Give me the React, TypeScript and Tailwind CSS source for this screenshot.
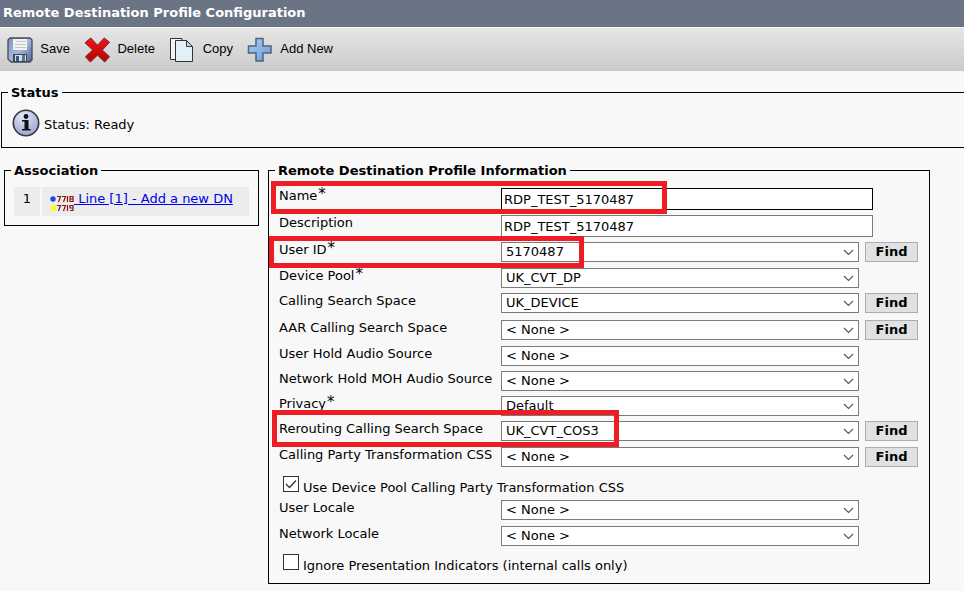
import type { ReactNode } from 'react';

interface Field {
  id: string;
  label: string;
  value: string;
  kind: 'text' | 'select';
  required?: boolean;
  find?: boolean;
  row: string;
  mark?: string;
}

const fields: Field[] = [
  { id: 'name', label: 'Name', value: 'RDP_TEST_5170487', kind: 'text', required: true, row: 'h-[27px]', mark: '-left-2 -top-[7px] w-[396px] h-[33px]' },
  { id: 'description', label: 'Description', value: 'RDP_TEST_5170487', kind: 'text', row: 'h-[27px]' },
  { id: 'userid', label: 'User ID', value: '5170487', kind: 'select', required: true, find: true, row: 'h-[26px]', mark: '-left-[10px] -top-[6px] w-[315px] h-[32px]' },
  { id: 'pool', label: 'Device Pool', value: 'UK_CVT_DP', kind: 'select', required: true, row: 'h-[25px]' },
  { id: 'css', label: 'Calling Search Space', value: 'UK_DEVICE', kind: 'select', find: true, row: 'h-[27px]' },
  { id: 'aar', label: 'AAR Calling Search Space', value: '< None >', kind: 'select', find: true, row: 'h-[26px]' },
  { id: 'userhold', label: 'User Hold Audio Source', value: '< None >', kind: 'select', row: 'h-[25px]' },
  { id: 'nethold', label: 'Network Hold MOH Audio Source', value: '< None >', kind: 'select', row: 'h-[25px]' },
  { id: 'privacy', label: 'Privacy', value: 'Default', kind: 'select', required: true, row: 'h-[25px]' },
  { id: 'rerouting', label: 'Rerouting Calling Search Space', value: 'UK_CVT_COS3', kind: 'select', find: true, row: 'h-[26px]', mark: '-left-[7px] -top-[11px] w-[347px] h-[37px]' },
  { id: 'party', label: 'Calling Party Transformation CSS', value: '< None >', kind: 'select', find: true, row: 'h-[26px]' },
];

const locales: Field[] = [
  { id: 'userlocale', label: 'User Locale', value: '< None >', kind: 'select', row: 'h-[26px]' },
  { id: 'netlocale', label: 'Network Locale', value: '< None >', kind: 'select', row: 'h-[25px]' },
];

function SaveIcon() {
  return (
    <svg width="26" height="26" viewBox="0 0 26 26">
      <defs>
        <linearGradient id="disk" x1="0" y1="0" x2="1" y2="1">
          <stop offset="0" stopColor="#7f95bd" />
          <stop offset=".5" stopColor="#a3b8db" />
          <stop offset="1" stopColor="#4c648f" />
        </linearGradient>
      </defs>
      <path d="M3 1h20l2 2v20l-2 2H4l-3-3V3z" fill="url(#disk)" stroke="#434a58" strokeWidth="1.300" />
      <path d="M6 2h14v11H6z" fill="#f3f3f3" />
      <path d="M9 4.500h10M8 7.500h11M8 10.500h11" stroke="#c3c5c8" />
      <path d="M6 17h14v8H6z" fill="#3c4656" />
      <path d="M8 18h11v6H8z" fill="#d5dfdf" />
      <path d="M9 19h3v5H9z" fill="#2c5c93" />
      <path d="M15 18h3v6h-3z" fill="#5f7484" />
    </svg>
  );
}

function DeleteIcon() {
  return (
    <svg width="27" height="28" viewBox="0 0 28 28">
      <defs>
        <linearGradient id="cross" x1="0" y1="0" x2="0" y2="1">
          <stop offset="0" stopColor="#f31414" />
          <stop offset="1" stopColor="#b30505" />
        </linearGradient>
      </defs>
      <path d="M1 6.500 7 1.500l7 7.500 7-7.500 5.500 4.500-7.500 8 7.500 7-5 5.500L14 19.500l-7.500 7L1.500 21 9 14z" fill="url(#cross)" stroke="#7b2236" />
    </svg>
  );
}

function CopyIcon() {
  return (
    <svg width="25" height="26" viewBox="0 0 25 26">
      <path d="M1.500 1.500H13v21H1.500z" fill="#f2f6f7" stroke="#333" />
      <path d="M6.500 3.500h11l6 6v15h-17z" fill="#e3f1f6" stroke="#333" />
      <path d="M17.500 3.500v6h6z" fill="#c4dae2" stroke="#333" />
    </svg>
  );
}

function AddIcon() {
  return (
    <svg width="25" height="25" viewBox="0 0 25 25">
      <defs>
        <linearGradient id="plus" x1="0" y1="0" x2="1" y2="1">
          <stop offset="0" stopColor="#a9cdf3" />
          <stop offset="1" stopColor="#6a9cd8" />
        </linearGradient>
      </defs>
      <path d="M9 1.500h7v7.500h8v7h-8v8H9v-8H1.500V9H9z" fill="url(#plus)" stroke="#55627a" strokeWidth="1.500" />
    </svg>
  );
}

function InfoIcon() {
  return (
    <svg width="28" height="28" viewBox="0 0 28 28">
      <defs>
        <radialGradient id="info" cx=".4" cy=".25" r=".8">
          <stop offset="0" stopColor="#e4e8f6" />
          <stop offset="1" stopColor="#97a3cf" />
        </radialGradient>
      </defs>
      <circle cx="14" cy="14" r="12.700" fill="url(#info)" stroke="#33363f" strokeWidth="1.600" />
      <circle cx="14" cy="7.500" r="2.400" fill="#111" />
      <path d="M10 11h6.500v9h2v1.500H10V20h2.500v-7.500H10z" fill="#111" />
    </svg>
  );
}

// two directory-number plates, 7718 over 7719
function LineIcon() {
  return (
    <svg width="24" height="17" viewBox="0 0 24 17" className="shrink-0">
      <circle cx="3" cy="4" r="2.700" fill="#1748e8" />
      <path d="M1 10.500h5v5H1z" fill="#ff0" />
      <path
        d="M7 1.500h3.500L8.500 7M12 1.500h3.500L13.500 7M17.500 1v6M20 1.500h3v5h-3zM20 4h3M7 10.500h3.500L8.500 16M12 10.500h3.500L13.500 16M17.500 10v6M23 13h-3v-2.500h3v5h-3"
        fill="none"
        stroke="#8b1212"
        strokeWidth="1.200"
      />
    </svg>
  );
}

function Tool({ icon, label, width }: { icon: ReactNode; label: string; width: string }) {
  return (
    <button type="button" className={`flex items-center justify-between ${width}`}>
      {icon}
      <span className="pb-[2px] font-['Liberation_Sans',Arial,sans-serif] leading-4 whitespace-nowrap">{label}</span>
    </button>
  );
}

function FieldRow({ field }: { field: Field }) {
  return (
    <div className={`relative flex items-start ${field.row}`}>
      <label htmlFor={field.id} className="flex w-[222px] shrink-0 leading-4 whitespace-nowrap">
        {field.label}
        {field.required && <span className="pl-px text-[15px] leading-3">*</span>}
      </label>
      {field.kind === 'text' ? (
        <input
          id={field.id}
          defaultValue={field.value}
          className={`h-[22px] w-[372px] border bg-white px-[2px] ${field.id === 'name' ? 'border-black' : 'border-[#7a7a7a]'}`}
        />
      ) : (
        <div className="relative w-[358px] shrink-0">
          <select
            id={field.id}
            className="block h-5 w-full appearance-none border border-[#7a7a7a] bg-white pl-1 leading-4"
          >
            <option>{field.value}</option>
          </select>
          <svg width="11" height="7" viewBox="0 0 11 7" className="pointer-events-none absolute top-[7px] right-[5px]">
            <path d="M1 1l4.500 4.500L10 1" fill="none" stroke="#555" strokeWidth="1.100" />
          </svg>
        </div>
      )}
      {field.find && (
        <button type="button" className="ml-1.5 h-5 w-[53px] shrink-0 border border-[#adadad] bg-[#e1e1e1] leading-4 font-bold">
          Find
        </button>
      )}
      {field.mark && <span className={`pointer-events-none absolute z-10 border-[5px] border-[#ee1c24] ${field.mark}`} />}
    </div>
  );
}

function Check({ id, label, checked }: { id: string; label: string; checked?: boolean }) {
  return (
    <div className="flex h-[27px] items-start gap-1 pt-[3px] pl-1">
      <span className="relative size-4">
        <input id={id} type="checkbox" defaultChecked={checked} className="peer block size-4 appearance-none border border-[#333] bg-white" />
        <svg width="16" height="16" viewBox="0 0 16 16" className="pointer-events-none absolute inset-0 hidden peer-checked:block">
          <path d="M3 8l3.500 3.500L13 4.500" fill="none" stroke="#333" strokeWidth="1.300" />
        </svg>
      </span>
      <label htmlFor={id} className="pt-1 leading-4 whitespace-nowrap">{label}</label>
    </div>
  );
}

export default function App() {
  return (
    <div className="min-h-screen overflow-x-hidden bg-[#f8f8f8] font-['DejaVu_Sans',Verdana,sans-serif] text-[13px] text-black">
      <h1 className="h-[27px] bg-[#6b7485] pl-[3px] leading-[26px] font-bold text-white">Remote Destination Profile Configuration</h1>
      <div className="flex h-11 items-center gap-[14px] border-t border-white bg-linear-to-b from-[#e6e6e6] to-[#cbcbcb] pl-[7px]">
        <Tool icon={<SaveIcon />} label="Save" width="w-[63px]" />
        <Tool icon={<DeleteIcon />} label="Delete" width="w-[71px]" />
        <Tool icon={<CopyIcon />} label="Copy" width="w-[64px]" />
        <Tool icon={<AddIcon />} label="Add New" width="w-[86px]" />
      </div>

      <fieldset className="mt-3 ml-px h-[65px] border border-r-0 border-black">
        <legend className="ml-1.5 px-[3px] pt-[2px] leading-4 font-bold">Status</legend>
        <div className="flex items-center gap-1 pt-2 pl-2.5">
          <InfoIcon />
          <span className="pt-1">Status: Ready</span>
        </div>
      </fieldset>

      <div className="mt-[13px] flex items-start gap-[9px] pr-[34px] pl-1">
        <fieldset className="w-[255px] shrink-0 border border-black pb-[9px]">
          <legend className="ml-1.5 px-[3px] pt-[2px] leading-4 font-bold">Association</legend>
          <div className="mx-[9px] mt-2 flex h-[29px] gap-[2px]">
            <div className="w-[26px] bg-[#ececec] pt-1 text-center leading-4">1</div>
            <div className="flex flex-1 bg-[#ececec] pl-2">
              <a href="#line" className="flex items-start pt-1 leading-4 whitespace-nowrap text-[#0000ee]">
                <span className="pt-1"><LineIcon /></span>
                <span className="whitespace-pre underline"> Line [1] - Add a new DN</span>
              </a>
            </div>
          </div>
        </fieldset>

        <fieldset className="min-w-0 flex-1 border border-black pb-[5px]">
          <legend className="ml-1.5 px-[3px] pt-[2px] leading-4 font-bold">Remote Destination Profile Information</legend>
          <div className="pt-[9px] pl-[10px]">
            {fields.map(f => <FieldRow key={f.id} field={f} />)}
            <Check id="usepool" label="Use Device Pool Calling Party Transformation CSS" checked />
            {locales.map(f => <FieldRow key={f.id} field={f} />)}
            <Check id="ignore" label="Ignore Presentation Indicators (internal calls only)" />
          </div>
        </fieldset>
      </div>
    </div>
  );
}
